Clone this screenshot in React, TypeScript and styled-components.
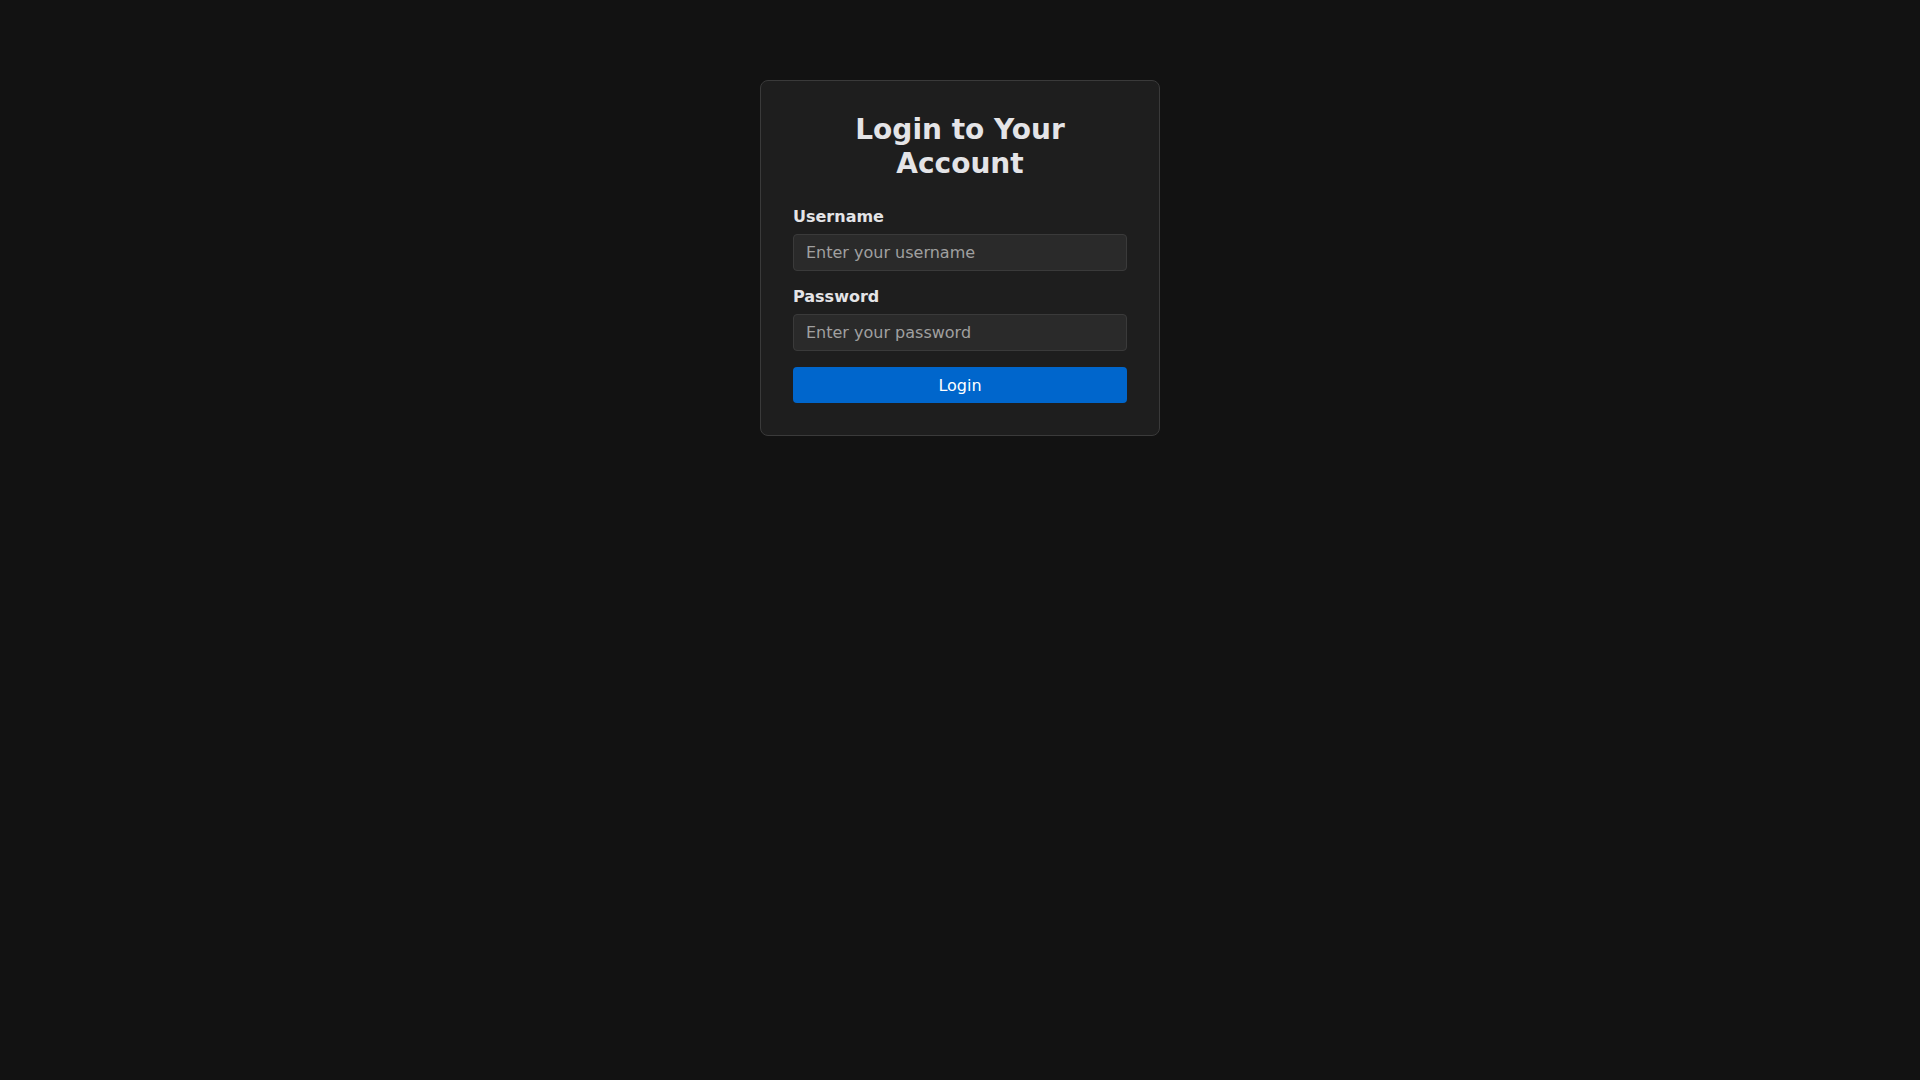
import styled, { createGlobalStyle } from 'styled-components';

const GlobalStyle = createGlobalStyle`
	html, body {
		margin: 0;
		background: #121212;
		font-family: 'DejaVu Sans', sans-serif;
		color: #e0e0e0;
	}
`;

const Page = styled.div`
	min-height: 100vh;
	display: flex;
	justify-content: center;
	align-items: flex-start;
	padding-top: 80px;
	box-sizing: border-box;
`;

const Card = styled.form`
	width: 400px;
	box-sizing: border-box;
	padding: 32px;
	background: #1e1e1e;
	border: 1px solid #3a3a3a;
	border-radius: 8px;
	display: flex;
	flex-direction: column;
`;

const Title = styled.h1`
	margin: 0 0 26px;
	font-size: 28px;
	line-height: 34px;
	font-weight: bold;
	text-align: center;
	color: #e4e4e7;
`;

const Label = styled.label`
	font-size: 16px;
	font-weight: bold;
	margin-bottom: 8px;
	color: #e4e4e7;
`;

const Input = styled.input`
	box-sizing: border-box;
	height: 37px;
	padding: 8px 12px;
	font-family: inherit;
	font-size: 16px;
	background: #2a2a2a;
	border: 1px solid #3a3a3a;
	border-radius: 4px;
	color: #e0e0e0;
	margin-bottom: 16px;
	&::placeholder {
		color: #a0a0a0;
	}
`;

const Button = styled.button`
	height: 36px;
	font-family: inherit;
	font-size: 16px;
	color: #fff;
	background: #0066cc;
	border: none;
	border-radius: 4px;
`;

export default function App() {
	return (
		<>
			<GlobalStyle />
			<Page>
				<Card onSubmit={e => e.preventDefault()}>
					<Title>Login to Your Account</Title>
					<Label>Username</Label>
					<Input placeholder="Enter your username" />
					<Label>Password</Label>
					<Input type="password" placeholder="Enter your password" />
					<Button type="submit">Login</Button>
				</Card>
			</Page>
		</>
	);
}
